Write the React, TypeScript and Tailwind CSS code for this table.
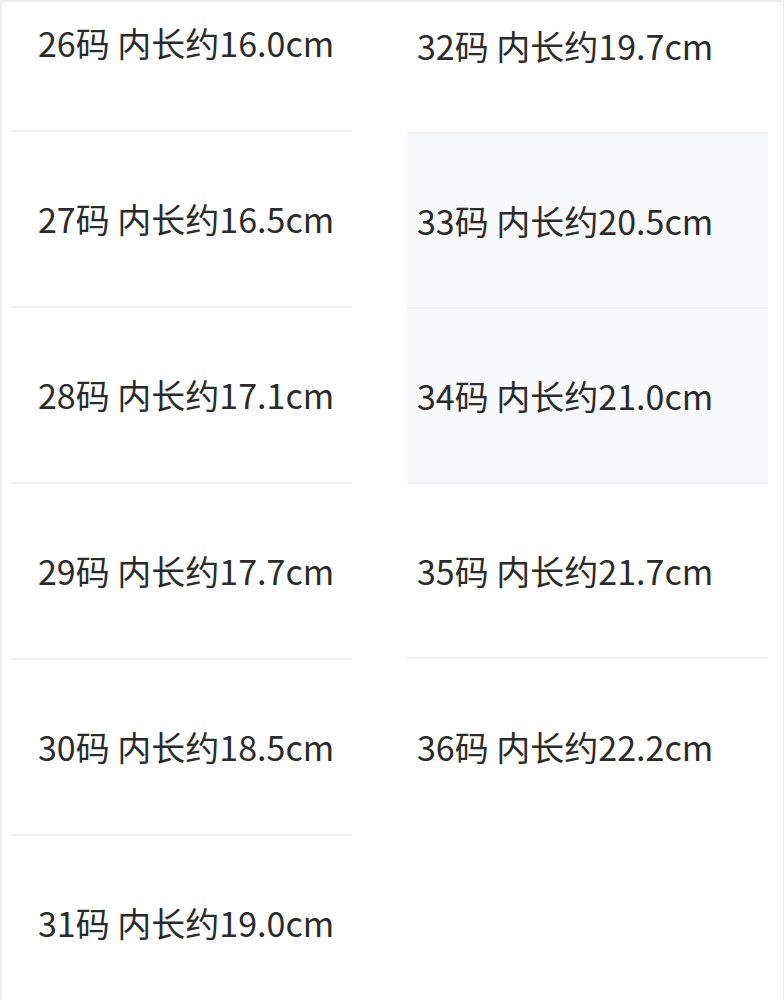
import React from "react";

const left = [
  "26码 内长约16.0cm",
  "27码 内长约16.5cm",
  "28码 内长约17.1cm",
  "29码 内长约17.7cm",
  "30码 内长约18.5cm",
  "31码 内长约19.0cm",
];

const right = [
  { label: "32码 内长约19.7cm", active: false },
  { label: "33码 内长约20.5cm", active: true },
  { label: "34码 内长约21.0cm", active: true },
  { label: "35码 内长约21.7cm", active: false },
  { label: "36码 内长约22.2cm", active: false },
];

const textCls =
  "text-[34px] leading-none text-[#2b2b2b] font-['Noto_Sans_CJK_SC','Noto_Sans',sans-serif] whitespace-nowrap";

export default function App() {
  return (
    <div className="w-[784px] h-[1000px] overflow-hidden bg-white border-l-2 border-t-2 border-r border-[#ededed]">
      <div className="flex items-start">
        {/* left column */}
        <div className="ml-[10px] w-[340px] -mt-[46px] flex flex-col">
          {left.map((l) => (
            <div
              key={l}
              className="h-[176px] flex items-center pl-[26px] border-b-2 border-[#f0f0f0]"
            >
              <span className={textCls}>{l}</span>
            </div>
          ))}
        </div>

        {/* right column */}
        <div className="ml-[55px] w-[361px] -mt-[43px] flex flex-col">
          {right.map((r, i) => (
            <div
              key={r.label}
              className={`h-[175px] flex items-center pl-[10px] ${
                i === right.length - 1 ? "" : "border-b-2"
              } ${r.active ? "bg-[#f7f9fd] border-[#eef1f6]" : "border-[#f0f0f0]"}`}
            >
              <span className={textCls}>{r.label}</span>
            </div>
          ))}
        </div>
      </div>
    </div>
  );
}
